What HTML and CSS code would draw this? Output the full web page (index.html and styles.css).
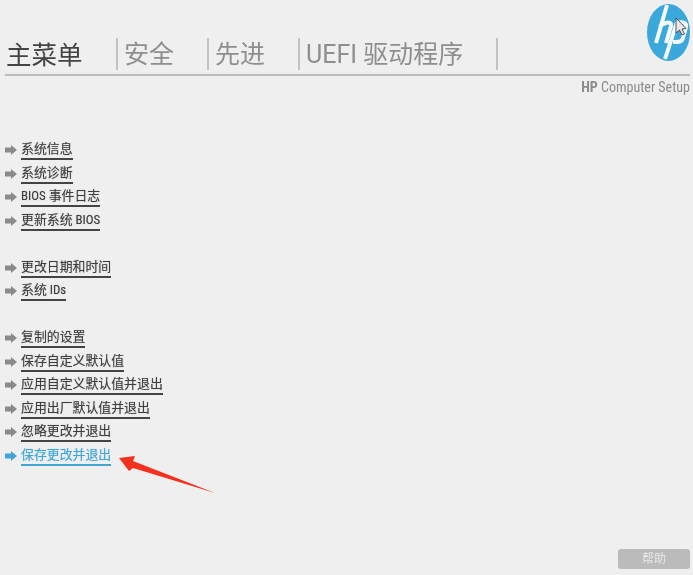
FILE: index.html
```html
<!DOCTYPE html>
<html lang="zh">
	<head>
		<meta charset="utf-8">
		<title>HP Computer Setup</title>
		<link rel="stylesheet" href="styles.css">
	</head>
	<body>
		<div class="header">
			<div class="tabs">
				<div class="tab active">主菜单</div>
				<div class="tab">安全</div>
				<div class="tab">先进</div>
				<div class="tab">UEFI 驱动程序</div>
			</div>
			<svg class="logo" viewBox="0 0 43 57" width="43" height="57">
				<ellipse cx="21.5" cy="28.5" rx="21.5" ry="28.5" fill="#3aa8da"/>
				<g fill="none" stroke="#f4f9fc" stroke-width="4">
					<path d="M20 1 L9 39"/>
					<path d="M13 23 C15 19 25 16 24 22 L19 39"/>
					<path d="M30 18 L18 55"/>
					<path d="M29 19 C33 18 40 17 39 23 L36 34 C35 38 32 38 26 38"/>
				</g>
				<path d="M29 14 L29 29 L32.5 26 L35 31 L37.5 30 L35 25 L39 24.5 Z" fill="#e8e8e8" stroke="#444" stroke-width="0.9"/>
			</svg>
		</div>
		<div class="subtitle"><b>HP</b> Computer Setup</div>

		<div class="menu">
			<div class="group">
				<div class="item"><svg class="arrow" viewBox="0 0 12 10"><path d="M0 2.5 H6 V0 L12 5 L6 10 V7.5 H0 Z"/></svg><span class="label">系统信息</span></div>
				<div class="item"><svg class="arrow" viewBox="0 0 12 10"><path d="M0 2.5 H6 V0 L12 5 L6 10 V7.5 H0 Z"/></svg><span class="label">系统诊断</span></div>
				<div class="item"><svg class="arrow" viewBox="0 0 12 10"><path d="M0 2.5 H6 V0 L12 5 L6 10 V7.5 H0 Z"/></svg><span class="label">BIOS 事件日志</span></div>
				<div class="item"><svg class="arrow" viewBox="0 0 12 10"><path d="M0 2.5 H6 V0 L12 5 L6 10 V7.5 H0 Z"/></svg><span class="label">更新系统 BIOS</span></div>
			</div>
			<div class="group">
				<div class="item"><svg class="arrow" viewBox="0 0 12 10"><path d="M0 2.5 H6 V0 L12 5 L6 10 V7.5 H0 Z"/></svg><span class="label">更改日期和时间</span></div>
				<div class="item"><svg class="arrow" viewBox="0 0 12 10"><path d="M0 2.5 H6 V0 L12 5 L6 10 V7.5 H0 Z"/></svg><span class="label">系统 IDs</span></div>
			</div>
			<div class="group">
				<div class="item"><svg class="arrow" viewBox="0 0 12 10"><path d="M0 2.5 H6 V0 L12 5 L6 10 V7.5 H0 Z"/></svg><span class="label">复制的设置</span></div>
				<div class="item"><svg class="arrow" viewBox="0 0 12 10"><path d="M0 2.5 H6 V0 L12 5 L6 10 V7.5 H0 Z"/></svg><span class="label">保存自定义默认值</span></div>
				<div class="item"><svg class="arrow" viewBox="0 0 12 10"><path d="M0 2.5 H6 V0 L12 5 L6 10 V7.5 H0 Z"/></svg><span class="label">应用自定义默认值并退出</span></div>
				<div class="item"><svg class="arrow" viewBox="0 0 12 10"><path d="M0 2.5 H6 V0 L12 5 L6 10 V7.5 H0 Z"/></svg><span class="label">应用出厂默认值并退出</span></div>
				<div class="item"><svg class="arrow" viewBox="0 0 12 10"><path d="M0 2.5 H6 V0 L12 5 L6 10 V7.5 H0 Z"/></svg><span class="label">忽略更改并退出</span></div>
				<div class="item selected"><svg class="arrow" viewBox="0 0 12 10"><path d="M0 2.5 H6 V0 L12 5 L6 10 V7.5 H0 Z"/></svg><span class="label">保存更改并退出</span></div>
			</div>
		</div>

		<!-- red annotation arrow drawn over the screenshot -->
		<svg class="callout" viewBox="0 0 100 40" width="100" height="40">
			<path d="M1 3 L17 1 L15 6 L97 38 L15 13 L11 16 Z" fill="#f4301f"/>
		</svg>

		<div class="footer">
			<div class="help">帮助</div>
		</div>
	</body>
</html>
```

FILE: styles.css
```css
html, body {
	height: 100%;
}

body {
	margin: 0;
	background-color: #efefef;
	font-family: Roboto, "Noto Sans CJK SC", sans-serif;
	color: #444;
	display: flex;
	flex-direction: column;
	overflow: hidden;
	filter: blur(0.35px);
}

.header {
	display: flex;
	justify-content: space-between;
	align-items: flex-end;
	height: 74px;
	margin: 0 3px 0 5px;
	border-bottom: 2px solid #bcbcc0;
}

.tabs {
	display: flex;
	margin-bottom: 4px;
}

.tab {
	height: 32px;
	line-height: 34px;
	padding: 0 33px 0 6px;
	border-right: 2px solid #c2c2c2;
	font-size: 25px;
	color: #8e8e8e;
	white-space: nowrap;
}

.tab.active {
	padding: 0 33.5px 0 1px;
	font-size: 25.5px;
	color: #444;
}

.logo {
	align-self: flex-start;
	margin-top: 4px;
	flex-shrink: 0;
}

.subtitle {
	text-align: right;
	margin: 2px 3px 0 0;
	font-size: 14px;
	font-stretch: condensed;
	line-height: 18px;
	color: #8b8b8b;
}

.subtitle b {
	font-weight: 700;
}

.menu {
	margin: 42px 0 0 5px;
}

.group {
	margin-bottom: 23.5px;
}

.item {
	display: flex;
	align-items: center;
	height: 23.5px;
	font-size: 12.9px;
	font-stretch: condensed;
	color: #3e3e3e;
	text-shadow: 0 0 1px rgba(60, 60, 60, .45);
}

.arrow {
	width: 12px;
	height: 10px;
	margin: 1px 4px 0 0;
	fill: #8a8a8a;
}

.label {
	line-height: 19px;
	border-bottom: 2px solid #444;
	white-space: nowrap;
}

.selected {
	color: #3fa6d6;
	text-shadow: 0 0 1px rgba(63, 166, 214, .45);
}

.selected .arrow {
	fill: #3fa6d6;
}

.selected .label {
	border-bottom-color: #3fa6d6;
}

.callout {
	position: absolute;
	left: 118px;
	top: 455px;
}

.footer {
	margin-top: auto;
	display: flex;
	justify-content: flex-end;
	padding: 0 3px 6px 0;
}

.help {
	width: 72px;
	height: 20px;
	line-height: 20px;
	text-align: center;
	background-color: #bbb;
	border-radius: 3px;
	font-size: 12px;
	color: #e8e8e8;
}
```
